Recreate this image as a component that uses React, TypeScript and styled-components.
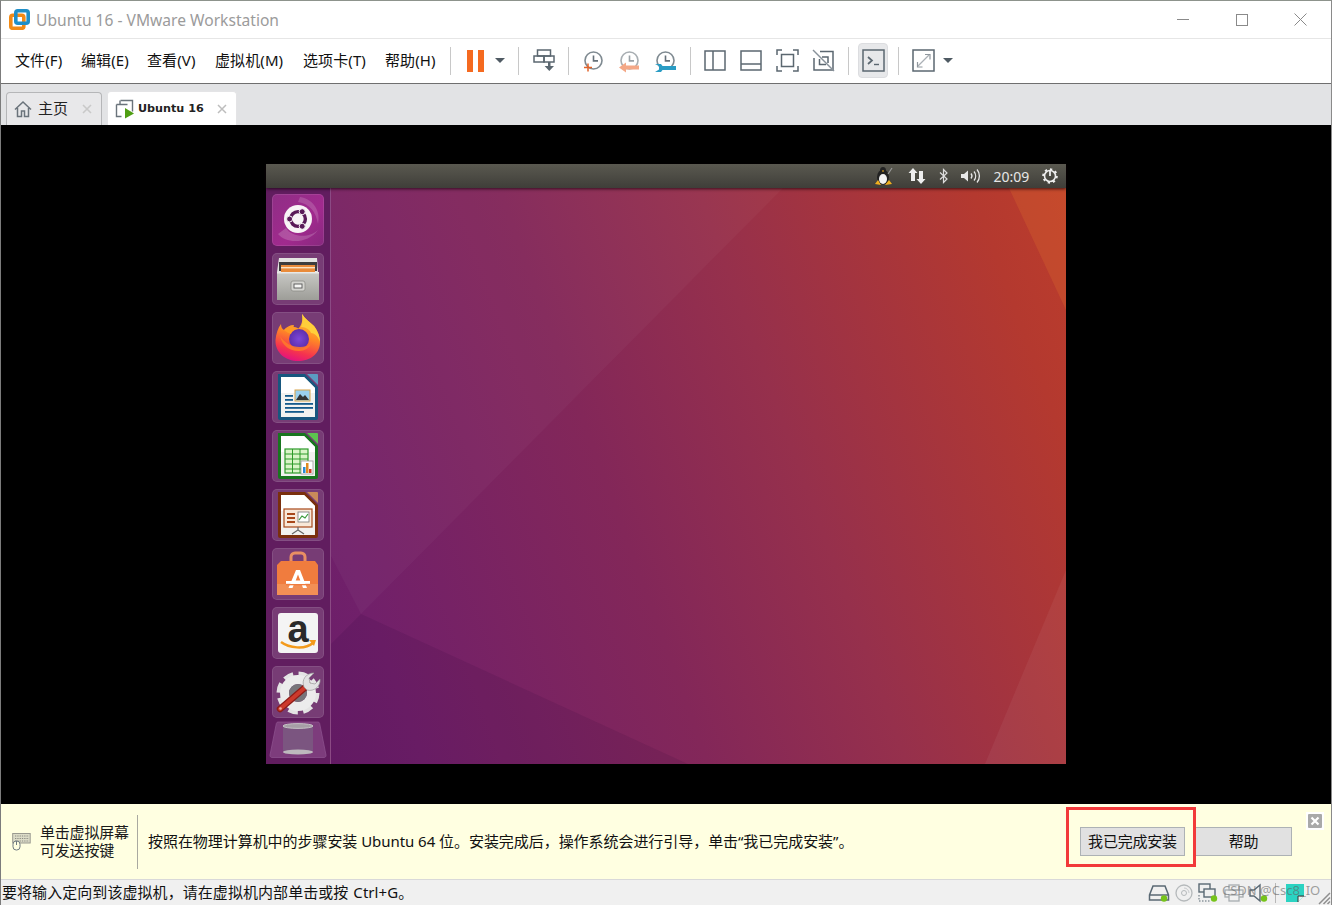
import React from 'react';
import styled, { createGlobalStyle } from 'styled-components';

const Global = createGlobalStyle`
  html, body { margin: 0; padding: 0; background: #fff; overflow: hidden; }
  #root { width: 1332px; height: 905px; }
`;

const FONT = `"Noto Sans", "Noto Sans CJK SC", sans-serif`;

const Win = styled.div`
  position: relative;
  width: 1332px; height: 905px; box-sizing: border-box;
  display: flex; flex-direction: column;
  background: #fff;
  border-top: 1px solid #8d938c;
  border-left: 1px solid #7c7c7c;
  border-right: 1px solid #8a8a8a;
  font-family: ${FONT};
  font-size: 15px; color: #111;
  overflow: hidden;
`;
const TitleBar = styled.div`
  height: 37px; flex: none; display: flex; align-items: center;
  padding-left: 8px; border-bottom: 1px solid #e6e6e6; box-sizing: content-box;
`;
const TitleText = styled.div`
  margin-left: 6px; font-size: 15.6px; color: #9b9b9b; flex: 1; white-space: nowrap;
`;
const WinBtn = styled.div`
  width: 59px; height: 37px; display: flex; align-items: center; justify-content: center;
`;
const WinBtns = styled.div`display: flex; margin-right: 1px;`;

const Toolbar = styled.div`
  height: 43px; padding-bottom: 1px; flex: none; display: flex; align-items: center;
  padding-left: 14px; border-bottom: 1px solid #6f6f6f;
`;
const Menu = styled.div`
  display: flex; width: 422px; flex: none; white-space: nowrap; font-size: 15px; padding-bottom: 3px;
`;
const MenuItem = styled.span<{ $w: number }>`
  width: ${p => p.$w}px; flex: none; letter-spacing: .1px;
`;
const Sep = styled.div<{ $l: number }>`
  width: 1px; height: 28px; background: #c8c8c8; margin-left: ${p => p.$l}px; flex: none;
`;
const Slot = styled.div<{ $w: number; $l?: number }>`
  width: ${p => p.$w}px; margin-left: ${p => p.$l || 0}px; height: 24px; flex: none;
  display: flex; align-items: center; justify-content: center;
`;
const Pressed = styled.div`
  width: 30px; height: 35px; margin-left: 9px; flex: none; box-sizing: border-box;
  display: flex; align-items: center; justify-content: center;
  background: #e7e8ea; border: 1px solid #dcdde0; border-radius: 4px;
`;
const Caret = styled.div`
  width: 0; height: 0; border-left: 5px solid transparent; border-right: 5px solid transparent; border-top: 5px solid #4f5a63;
`;

const TabBar = styled.div`
  height: 41px; flex: none; background: #e2e3e5; display: flex; align-items: flex-end; padding-left: 5px; gap: 5px;
`;
const Tab = styled.div<{ $on?: boolean; $w: number }>`
  width: ${p => p.$w}px; height: ${p => (p.$on ? 34 : 33)}px; box-sizing: border-box; display: flex; align-items: center;
  padding-left: 7px;
  background: ${p => (p.$on ? '#fff' : '#e8e8ea')};
  border: 1px solid ${p => (p.$on ? '#e4e4e6' : '#b5b6b8')}; border-bottom: none;
  border-radius: 4px 4px 0 0;
`;
const TabLabel = styled.span<{ $on?: boolean }>`
  flex: 1; white-space: nowrap;
  margin-left: ${p => (p.$on ? 3 : 6)}px;
  padding-bottom: ${p => (p.$on ? 0 : 4)}px;
  font-family: ${p => (p.$on ? `"DejaVu Sans", sans-serif` : FONT)};
  font-weight: ${p => (p.$on ? 700 : 400)};
  font-size: ${p => (p.$on ? 11.2 : 15)}px;
  color: #222;
`;
const TabX = styled.span`
  width: 19px; display: flex; justify-content: flex-start; flex: none;
`;

const Stage = styled.div`
  flex: 1; background: #000; display: flex; align-items: center; justify-content: center; min-height: 0; padding-bottom: 1px;
`;
const Guest = styled.div`
  width: 800px; height: 600px; display: flex; flex-direction: column; flex: none;
  font-family: "Noto Sans", sans-serif;
`;
const Panel = styled.div`
  height: 24px; flex: none; display: flex; align-items: center; justify-content: flex-end; padding-right: 4px;
  background: linear-gradient(#5a5950, #3f3e39);
  position: relative; z-index: 2;
  box-shadow: 0 1px 3px rgba(20, 0, 10, .75);
  color: #e6e6e6;
`;
const PanelSlot = styled.div<{ $w: number }>`
  width: ${p => p.$w}px; display: flex; justify-content: center; align-items: center; height: 24px; font-size: 14px;
`;
const Desktop = styled.div`flex: 1; display: flex; min-height: 0;`;
const Launcher = styled.div`
  width: 64px; flex: none; display: flex; flex-direction: column; align-items: center; gap: 7px; padding-top: 6px;
  background: #611d5f; border-right: 1px solid #8b4a84;
`;
const Tile = styled.div<{ $bg?: string }>`
  width: 52px; height: 52px; flex: none; box-sizing: border-box; border-radius: 5px;
  background: ${p => p.$bg || 'rgba(255,255,255,.14)'};
  box-shadow: inset 0 0 0 1px rgba(255,255,255,.1);
  display: flex;
`;
const TrashBox = styled.div`width: 58px; height: 37px; flex: none; margin-top: -4px;`;
const Wallpaper = styled.div`
  flex: 1; position: relative;
  background: linear-gradient(70deg, #6a1e69 0%, #71206a 10%, #832759 40%, #96304c 61%, #b4392f 90%, #bc3d2c 100%);
`;
const Facets = styled.svg`position: absolute; inset: 0; width: 100%; height: 100%;`;

const Notice = styled.div`
  position: relative; height: 75px; flex: none; background: #ffffe1; display: flex; align-items: center; padding-left: 11px;
`;
const Hint = styled.div`
  margin-left: 9px; width: 96px; line-height: 18px; padding-bottom: 1px; font-size: 15px; white-space: nowrap; color: #1a1a1a; letter-spacing: -.2px;
`;
const NoticeSep = styled.div`width: 1px; height: 54px; background: #a9a9a0; margin-left: 1px; flex: none;`;
const Message = styled.div`flex: 1; margin-left: 10px; padding-bottom: 3px; white-space: nowrap; font-size: 15px; letter-spacing: -.05px; color: #111;`;
const Btn = styled.div<{ $w: number; $l: number }>`
  width: ${p => p.$w}px; height: 29px; padding-bottom: 3px; margin-left: ${p => p.$l}px; box-sizing: border-box; flex: none;
  background: #e1e1e1; border: 1px solid #adb2b5;
  display: flex; align-items: center; justify-content: center; font-size: 15px; letter-spacing: -.2px; color: #111;
`;
const Spacer = styled.div`width: 39px; flex: none;`;
const Annot = styled.div`
  position: absolute; left: 1065px; top: 3px; width: 130px; height: 60px; box-sizing: border-box; border: 3px solid #f23a3a;
`;
const CloseBtn = styled.div`
  position: absolute; left: 1305px; top: 8px; width: 18px; height: 18px; background: #fff;
  display: flex; align-items: center; justify-content: center;
`;
const Status = styled.div`
  position: relative; height: 25px; flex: none; background: #f0f0f0; border-top: 1px solid #d9d9d9;
  display: flex; align-items: center; padding-left: 1px;
`;
const StatusText = styled.div`flex: 1; padding-bottom: 2px; white-space: nowrap; font-size: 15px; word-spacing: 1px; letter-spacing: .06px; color: #111;`;
const StatusIcons = styled.div`display: flex; align-items: center; flex: none;`;
const Watermark = styled.div`
  position: absolute; left: 1221px; top: 1px; font-size: 13px; color: rgba(100,100,100,.6); white-space: nowrap;
`;

const G = '#5b6770';

const Clock = ({ faded }: { faded?: boolean }) => (
  <g fill="none" stroke={faded ? '#a8aeb2' : '#7f8a91'} strokeWidth="1.6">
    <circle cx="12.5" cy="11.5" r="8.5" />
    <path d="M12.5 6.500v5.400h4.500" stroke={faded ? '#9aa1a6' : '#66717a'} />
  </g>
);

const VMLogo = () => (
  <svg width="21" height="21" viewBox="0 0 21 21">
    <rect x="1.800" y="6.300" width="13" height="13" rx="2" fill="none" stroke="#f28a14" strokeWidth="3.600" />
    <rect x="6.800" y="1.800" width="12.400" height="12.400" rx="2" fill="none" stroke="#1f8fc8" strokeWidth="3.600" />
  </svg>
);

const VMTabIcon = () => (
  <svg width="20" height="20" viewBox="0 0 20 20">
    <path d="M5.500 1.500h12v11M1.500 5.500h11M1.500 5.500v12h5" fill="none" stroke="#6a737b" strokeWidth="1.400" />
    <path d="M5 1.500v4" stroke="#6a737b" strokeWidth="1.400" />
    <path d="M10 9l9 5.500-9 5z" fill="#4f9e12" />
  </svg>
);

const Ubuntu = () => (
  <svg width="52" height="52" viewBox="0 0 52 52">
    <path d="M6 40C14 50 36 50 46 36C38 44 20 44 14 34Z" fill="#fff" opacity=".18" />
    <path d="M28 3C42 5 49 18 46 30C44 18 38 10 26 8Z" fill="#fff" opacity=".16" />
    <circle cx="26" cy="25" r="14" fill="#f8f4f6" />
    <circle cx="26" cy="25" r="7.400" fill="none" stroke="#5a1a58" strokeWidth="3.400" />
    <g fill="#5a1a58" stroke="#f8f4f6" strokeWidth="1">
      <circle cx="17.600" cy="25" r="3" />
      <circle cx="30.200" cy="17.700" r="3" />
      <circle cx="30.200" cy="32.300" r="3" />
    </g>
  </svg>
);
const Files = () => (
  <svg width="52" height="52" viewBox="0 0 52 52">
    <defs>
      <linearGradient id="cab" x1="0" y1="0" x2="0" y2="1"><stop offset="0" stopColor="#c9c9c5" /><stop offset="1" stopColor="#9d9d98" /></linearGradient>
    </defs>
    <path d="M7 5h38l1 14H5z" fill="#e4e4e2" />
    <rect x="7" y="9" width="38" height="9" fill="#3d3d3d" />
    <rect x="9" y="12" width="34" height="7" fill="#e98b3a" />
    <rect x="9" y="14" width="34" height="1.400" fill="#fbe3c4" />
    <rect x="5" y="19" width="42" height="28" fill="url(#cab)" />
    <rect x="5" y="19" width="42" height="1.500" fill="#e8e8e6" />
    <rect x="19" y="28" width="14" height="10" rx="2" fill="#d4d4d0" stroke="#8d8d88" strokeWidth=".8" />
    <rect x="22" y="31" width="8" height="4" fill="#f6f6f4" stroke="#555" strokeWidth=".9" />
  </svg>
);
const Firefox = () => (
  <svg width="52" height="52" viewBox="0 0 52 52">
    <defs>
      <linearGradient id="ff" x1=".7" y1="0" x2=".4" y2="1"><stop offset="0" stopColor="#ffd23c" /><stop offset=".45" stopColor="#ff8a25" /><stop offset=".8" stopColor="#f5334e" /><stop offset="1" stopColor="#e3127e" /></linearGradient>
      <radialGradient id="ffp" cx=".5" cy=".5" r=".55"><stop offset="0" stopColor="#7b48d8" /><stop offset="1" stopColor="#5a2ca8" /></radialGradient>
    </defs>
    <path d="M30 2c3 5 8 8 12 12 4 5 6 11 6 16 0 12-10 19-22 19C14 49 3 41 3.500 28 4 22 6 16 9 12c0 3 1 5 3 6 2-3 6-5 10-5-1 2 0 3 4 4 4-4 5-9 4-15z" fill="url(#ff)" />
    <path d="M30 2c3 5 8 8 12 12 3 4 6 10 6 16-2-6-6-9-9-9-2-5-7-6-10-6 2-4 2-9 1-13z" fill="#ffcf3a" />
    <circle cx="27" cy="27" r="10" fill="url(#ffp)" />
    <path d="M12 18c4-4 11-4 15-1-5 0-7 2-8 5-2-1-5-2-7-4z" fill="#ff9a26" />
    <path d="M8 24c2 9 9 15 19 15 6 0 10-3 12-7-3 2-7 3-11 3-9 0-15-4-20-11z" fill="#ff7a2a" opacity=".85" />
  </svg>
);
const Doc = ({ edge, corner, children }: { edge: string; corner: string; children: React.ReactNode }) => (
  <svg width="52" height="52" viewBox="0 0 52 52">
    <path d="M6 3h27l13 13v31a2 2 0 0 1-2 2H8a2 2 0 0 1-2-2z" fill={edge} />
    <path d="M35 3h10a1 1 0 0 1 1 1v10z" fill={corner} />
    <path d="M9 6h23l11 11v29H9z" fill="#f2f2f0" />
    <path d="M9 6h23l11 11v5H9z" fill="#fff" />
    {children}
  </svg>
);
const Writer = () => (
  <Doc edge="#17577f" corner="#5b9cc2">
    <g fill="#135a8c">
      <rect x="13" y="24" width="8" height="1.800" /><rect x="13" y="28" width="8" height="1.800" /><rect x="13" y="32" width="28" height="1.800" /><rect x="13" y="36" width="28" height="1.800" /><rect x="13" y="40" width="19" height="1.800" />
    </g>
    <rect x="23" y="19" width="15" height="11" fill="#9ad0ee" stroke="#d8a34a" strokeWidth="1" />
    <path d="M24 29l4-6 3 3 2-2 4 5z" fill="#333" />
  </Doc>
);
const Calc = () => (
  <Doc edge="#18761f" corner="#5cc34f">
    <rect x="13" y="19" width="23" height="24" fill="#d9f4c8" stroke="#2d9a2a" strokeWidth="1.200" />
    <path d="M13 24h23M13 29h23M13 34h23M13 39h23M20.500 19v24M28 19v24" stroke="#2d9a2a" strokeWidth="1" />
    <rect x="29" y="31" width="12" height="13" fill="#fff" stroke="#999" strokeWidth=".8" />
    <rect x="31" y="37" width="2.500" height="6" fill="#2a8ad4" /><rect x="34" y="33" width="2.500" height="10" fill="#e08a20" /><rect x="37" y="39" width="2.500" height="4" fill="#d23a2a" />
  </Doc>
);
const Impress = () => (
  <Doc edge="#7a2f0d" corner="#c98a5a">
    <rect x="12" y="20" width="28" height="18" fill="#f8e8d8" stroke="#a8481a" strokeWidth="1.200" />
    <g fill="#a8481a"><rect x="15" y="24" width="8" height="2" /><rect x="15" y="28" width="8" height="2" /><rect x="15" y="32" width="8" height="2" /></g>
    <rect x="26" y="23" width="11" height="10" fill="#fff" stroke="#777" strokeWidth=".8" />
    <path d="M27 31l3-4 3 2 3-4" fill="none" stroke="#3a9a3a" strokeWidth="1.200" />
    <path d="M26 38v3l-6 4M26 41l6 4" fill="none" stroke="#666" strokeWidth="1.200" />
  </Doc>
);
const Software = () => (
  <svg width="52" height="52" viewBox="0 0 52 52">
    <path d="M19 15V9a4 4 0 0 1 4-4h6a4 4 0 0 1 4 4v6" fill="none" stroke="#e98f63" strokeWidth="3" />
    <path d="M9 13h34l3 4v30H5V17z" fill="#f07c3e" />
    <rect x="5" y="36" width="41" height="11" fill="#f28f55" />
    <path d="M24 22h4l7 18h-4l-1.500-4h-7.500l-1.500 4h-4zM26 26.500l-2.300 6h4.600z" fill="#fff" fillRule="evenodd" />
    <rect x="14" y="33" width="24" height="2.800" fill="#fff" />
    <rect x="14" y="36" width="24" height="1.300" fill="#f07c3e" />
  </svg>
);
const AmazonLetter = styled.text`
  font-family: "Liberation Sans", sans-serif; font-weight: 700; font-size: 38px; fill: #2a2a2a;
`;
const Amazon = () => (
  <svg width="52" height="52" viewBox="0 0 52 52">
    <rect x="6" y="6" width="40" height="40" rx="3" fill="#f4f4f4" />
    <AmazonLetter x="26" y="35" textAnchor="middle">a</AmazonLetter>
    <path d="M9 35c8 6 24 8 32 1" fill="none" stroke="#f39a1c" strokeWidth="2.400" />
    <path d="M37 33h7l-2 6z" fill="#f39a1c" />
  </svg>
);
const Settings = () => (
  <svg width="52" height="52" viewBox="0 0 52 52">
    <circle cx="26" cy="27" r="19" fill="none" stroke="#e4e4e4" strokeWidth="5" strokeDasharray="9.500 5.420" />
    <circle cx="26" cy="27" r="13.500" fill="none" stroke="#ececec" strokeWidth="9" />
    <circle cx="26" cy="27" r="9" fill="#77757a" />
    <path d="M8 43L36 19" stroke="#8e1d18" strokeWidth="6.500" strokeLinecap="round" />
    <path d="M8 43L36 19" stroke="#cc3a2c" strokeWidth="4" strokeLinecap="round" />
    <path d="M32 21c-3-7 2-14 10-14l-5 5 1 5 5 1 5-5c1 7-6 13-13 11z" fill="#e2e2e2" stroke="#9a9a9a" strokeWidth=".7" />
    <circle cx="8.500" cy="42.500" r="1.300" fill="#f0b0a0" />
  </svg>
);
const Trash = () => (
  <svg width="58" height="37" viewBox="0 0 58 37">
    <path d="M9 1h40a2 2 0 0 1 1.600 1.200L57 34a2 2 0 0 1-2 2.500H3A2 2 0 0 1 1 34L7.400 2.200A2 2 0 0 1 9 1z" fill="#7d3c7c" stroke="#8f5590" strokeWidth=".7" />
    <path d="M14 5v24c0 4 30 4 30 0V5z" fill="#7b5580" />
    <ellipse cx="29" cy="5" rx="15" ry="2.400" fill="#a69ea6" stroke="#c4c0c4" strokeWidth="1" />
    <ellipse cx="29" cy="31" rx="15" ry="2.600" fill="#bdb9bd" />
  </svg>
);

const Tux = () => (
  <svg width="20" height="20" viewBox="0 0 20 20">
    <ellipse cx="9" cy="11" rx="6" ry="7.500" fill="#222" />
    <ellipse cx="9" cy="13" rx="4" ry="5" fill="#f4f4f4" />
    <ellipse cx="9" cy="4.500" rx="3" ry="3.500" fill="#222" />
    <path d="M8 5l1-1 1 1-1 1z" fill="#f2b01e" />
    <path d="M1 18l3-4 3 5zM11 19l4-5 3 4z" fill="#f2b01e" />
    <path d="M14 8l4-6" stroke="#9a9a9a" strokeWidth="1.200" />
  </svg>
);

const tools = {
  ctrl: (
    <svg width="22" height="23" viewBox="0 0 22 23">
      <g fill="none" stroke={G} strokeWidth="1.500">
        <rect x="4.500" y="1" width="13" height="6" />
        <rect x="1" y="7" width="10" height="6" />
        <rect x="11" y="7" width="10" height="6" />
      </g>
      <path d="M15 13h2.500v4H21l-4.700 5-4.700-5H15z" fill={G} />
    </svg>
  ),
  snap: (
    <svg width="24" height="24" viewBox="0 0 24 24">
      <Clock />
      <path d="M7 14.500v8M3 18.500h8" stroke="#e2632a" strokeWidth="1.500" fill="none" />
    </svg>
  ),
  revert: (
    <svg width="24" height="24" viewBox="0 0 24 24">
      <Clock faded />
      <path d="M2 18.500l7-5v3h13v4H9v3z" fill="#f4a887" />
    </svg>
  ),
  manage: (
    <svg width="24" height="24" viewBox="0 0 24 24">
      <Clock />
      <path d="M2 15h6l1.500 2H23v4H9.500L8 23H2l4-2.500V17z" fill="#2a9cc4" />
    </svg>
  ),
  left: (
    <svg width="22" height="21" viewBox="0 0 22 21"><rect x="1" y="1" width="20" height="19" fill="none" stroke={G} strokeWidth="1.500" /><path d="M9 1v19" stroke={G} strokeWidth="1.500" /></svg>
  ),
  bottom: (
    <svg width="22" height="21" viewBox="0 0 22 21"><rect x="1" y="1" width="20" height="19" fill="none" stroke={G} strokeWidth="1.500" /><path d="M1 14h20" stroke={G} strokeWidth="1.500" /></svg>
  ),
  full: (
    <svg width="23" height="23" viewBox="0 0 23 23"><path d="M1 6V1h5M17 1h5v5M22 17v5h-5M6 22H1v-5" fill="none" stroke={G} strokeWidth="1.500" /><rect x="5.500" y="5.500" width="12" height="12" fill="none" stroke={G} strokeWidth="1.500" /></svg>
  ),
  unity: (
    <svg width="23" height="23" viewBox="0 0 23 23">
      <path d="M8 2.500H21V21H2V9" fill="none" stroke={G} strokeWidth="1.500" />
      <path d="M10 8h6v6M14 15.500H7.500V10" fill="none" stroke={G} strokeWidth="1.500" />
      <path d="M1 1l21 21" stroke="#88919a" strokeWidth="1.400" />
    </svg>
  ),
  console: (
    <svg width="23" height="23" viewBox="0 0 23 23">
      <rect x="1" y="1" width="21" height="21" fill="none" stroke={G} strokeWidth="1.500" />
      <path d="M6 8l4 3.500-4 3.500" fill="none" stroke={G} strokeWidth="1.700" />
      <path d="M12 15.500h5" stroke={G} strokeWidth="1.400" />
    </svg>
  ),
  fit: (
    <svg width="23" height="23" viewBox="0 0 23 23">
      <rect x="1" y="1" width="21" height="21" fill="none" stroke={G} strokeWidth="1.500" />
      <path d="M6 17L17 6" stroke="#aab0b5" strokeWidth="1.200" />
      <path d="M13 5.500h5v5M5.500 13v5h5" fill="none" stroke="#8f979d" strokeWidth="1.200" />
    </svg>
  ),
};

const Dot = () => <circle cx="16" cy="15.500" r="3.200" fill="#76c31a" />;

const statusIcons = [
  { w: 25, ml: 0, el: (
    <svg width="22" height="20" viewBox="0 0 22 20"><path d="M5 3h12l3.500 9v5H1.500v-5zM1.500 12h19" fill="none" stroke="#596873" strokeWidth="1.500" /><Dot /></svg>
  ) },
  { w: 25, ml: 0, el: (
    <svg width="18" height="18" viewBox="0 0 18 18"><circle cx="9" cy="9" r="8" fill="none" stroke="#b5b9bb" strokeWidth="1.300" /><circle cx="9" cy="9" r="2.500" fill="none" stroke="#b5b9bb" /><path d="M9 4a5 5 0 0 1 5 5" fill="none" stroke="#c8cbcd" /></svg>
  ) },
  { w: 25, ml: 0, el: (
    <svg width="22" height="20" viewBox="0 0 22 20"><g fill="none" stroke="#596873" strokeWidth="1.400"><rect x="1" y="1" width="11" height="8" /><rect x="6" y="6" width="11" height="8" fill="#f0f0f0" /></g><path d="M1 12v6h11" fill="none" stroke="#596873" strokeDasharray="1.500 1.500" /><Dot /></svg>
  ) },
  { w: 25, ml: 0, el: (
    <svg width="20" height="18" viewBox="0 0 20 18"><g fill="none" stroke="#a7acb0" strokeWidth="1.300"><rect x="5" y="1" width="10" height="5" /><rect x="1" y="6" width="18" height="7" /><rect x="5" y="11" width="10" height="6" fill="#f0f0f0" /></g></svg>
  ) },
  { w: 25, ml: 0, el: (
    <svg width="22" height="20" viewBox="0 0 22 20"><path d="M2 7h4l6-5v16l-6-5H2z" fill="none" stroke="#596873" strokeWidth="1.400" /><Dot /></svg>
  ) },
  { w: 1, ml: 4, el: <svg width="1" height="20" viewBox="0 0 1 20"><rect width="1" height="20" fill="#b8b8b8" /></svg> },
  { w: 20, ml: 9, el: (
    <svg width="20" height="18" viewBox="0 0 20 18"><path d="M1 0h18v12l-6 6H1z" fill="#2bd3c2" /><path d="M13 18v-6h6" fill="#e8f5f3" stroke="#333" strokeWidth="1" /></svg>
  ) },
];

const GripSlot = styled.div`width: 14px; height: 24px; margin-left: 12px; display: flex; align-items: flex-end; flex: none;`;

const menuItems: [string, number][] = [['文件(F)', 66], ['编辑(E)', 66], ['查看(V)', 68], ['虚拟机(M)', 88], ['选项卡(T)', 82], ['帮助(H)', 52]];

export default function App() {
  return (
    <Win>
      <Global />
      <TitleBar>
        <VMLogo />
        <TitleText>Ubuntu 16 - VMware Workstation</TitleText>
        <WinBtns>
          <WinBtn><svg width="12" height="2" viewBox="0 0 12 2"><rect width="12" height="1" fill="#8a8a8a" /></svg></WinBtn>
          <WinBtn><svg width="12" height="12" viewBox="0 0 12 12"><rect x=".5" y=".5" width="11" height="11" fill="none" stroke="#8a8a8a" /></svg></WinBtn>
          <WinBtn><svg width="13" height="13" viewBox="0 0 13 13"><path d="M.5.5l12 12M12.500.5l-12 12" stroke="#8a8a8a" /></svg></WinBtn>
        </WinBtns>
      </TitleBar>
      <Toolbar>
        <Menu>
          {menuItems.map(([label, w]) => <MenuItem key={label} $w={w}>{label}</MenuItem>)}
        </Menu>
        <Sep $l={13} />
        <Slot $w={38} $l={5}>
          <svg width="17" height="22" viewBox="0 0 17 22"><rect width="6" height="22" fill="#f56a20" /><rect x="11" width="6" height="22" fill="#f56a20" /></svg>
        </Slot>
        <Slot $w={12}><Caret /></Slot>
        <Sep $l={12} />
        <Slot $w={49}>{tools.ctrl}</Slot>
        <Sep $l={0} />
        <Slot $w={36} $l={6}>{tools.snap}</Slot>
        <Slot $w={36}>{tools.revert}</Slot>
        <Slot $w={36}>{tools.manage}</Slot>
        <Sep $l={7} />
        <Slot $w={36} $l={6}>{tools.left}</Slot>
        <Slot $w={36}>{tools.bottom}</Slot>
        <Slot $w={36}>{tools.full}</Slot>
        <Slot $w={36}>{tools.unity}</Slot>
        <Sep $l={7} />
        <Pressed>{tools.console}</Pressed>
        <Sep $l={10} />
        <Slot $w={34} $l={7}>{tools.fit}</Slot>
        <Slot $w={12} $l={2}><Caret /></Slot>
      </Toolbar>
      <TabBar>
        <Tab $w={96}>
          <svg width="18" height="18" viewBox="0 0 18 18"><path d="M1 9.500L9 2l8 7.500M3.500 8v8.500h4V11h3v5.500h4V8" fill="none" stroke="#6a737b" strokeWidth="1.500" /></svg>
          <TabLabel>主页</TabLabel>
          <TabX><svg width="10" height="10" viewBox="0 0 10 10"><path d="M1 1l8 8M9 1l-8 8" stroke="#c9c9c9" strokeWidth="1.600" /></svg></TabX>
        </Tab>
        <Tab $on $w={130}>
          <VMTabIcon />
          <TabLabel $on>Ubuntu 16</TabLabel>
          <TabX><svg width="10" height="10" viewBox="0 0 10 10"><path d="M1 1l8 8M9 1l-8 8" stroke="#bdbdbd" strokeWidth="1.500" /></svg></TabX>
        </Tab>
      </TabBar>
      <Stage>
        <Guest>
          <Panel>
            <PanelSlot $w={38}><Tux /></PanelSlot>
            <PanelSlot $w={28}>
              <svg width="18" height="16" viewBox="0 0 18 16"><path d="M5 0l4.500 5H7v8H3V5H.5zM13 16l-4.500-5H11V3h4v8h2.500z" fill="#eee" /></svg>
            </PanelSlot>
            <PanelSlot $w={24}>
              <svg width="9" height="16" viewBox="0 0 9 16"><path d="M1 4.500l7 6.500-3.500 3.500V1.500L8 5 1 11.500" fill="none" stroke="#ddd" strokeWidth="1.200" /></svg>
            </PanelSlot>
            <PanelSlot $w={30}>
              <svg width="21" height="14" viewBox="0 0 21 14"><path d="M1 5h3l4-3.500v11L4 9H1z" fill="#e8e8e8" /><path d="M11 4.500a4 4 0 0 1 0 5M14 2.500a7 7 0 0 1 0 9M17 .5a10 10 0 0 1 0 13" fill="none" stroke="#e8e8e8" strokeWidth="1.300" /></svg>
            </PanelSlot>
            <PanelSlot $w={53}>20:09</PanelSlot>
            <PanelSlot $w={24}>
              <svg width="16" height="16" viewBox="0 0 16 16">
                <circle cx="8" cy="8" r="5.500" fill="none" stroke="#eee" strokeWidth="1.600" />
                <circle cx="8" cy="8" r="6.800" fill="none" stroke="#eee" strokeWidth="2" strokeDasharray="2.300 3" />
                <path d="M8 3v5" stroke="#eee" strokeWidth="1.800" />
              </svg>
            </PanelSlot>
          </Panel>
          <Desktop>
            <Launcher>
              <Tile $bg="linear-gradient(135deg,#8f2e85,#a12a8e 60%,#87287e)"><Ubuntu /></Tile>
              <Tile><Files /></Tile>
              <Tile><Firefox /></Tile>
              <Tile><Writer /></Tile>
              <Tile><Calc /></Tile>
              <Tile><Impress /></Tile>
              <Tile><Software /></Tile>
              <Tile><Amazon /></Tile>
              <Tile><Settings /></Tile>
              <TrashBox><Trash /></TrashBox>
            </Launcher>
            <Wallpaper>
              <Facets viewBox="0 0 735 576" preserveAspectRatio="none">
                <path d="M0 0H452L30 426 0 368z" fill="#fff" opacity=".03" />
                <path d="M30 426L357 576H0V456z" fill="#1a0030" opacity=".1" />
                <path d="M678 0L735 122V0z" fill="#e87a2c" opacity=".22" />
                <path d="M735 382L654 576H735z" fill="#fff" opacity=".05" />
              </Facets>
            </Wallpaper>
          </Desktop>
        </Guest>
      </Stage>
      <Notice>
        <svg width="19" height="19" viewBox="0 0 19 19">
          <rect x=".7" y="1.500" width="17.500" height="9.500" fill="#dcdcc8" stroke="#9a9a90" />
          <path d="M3 4h14M3 6.500h14M3 9h14" stroke="#8c8c84" strokeDasharray="1.300 1" />
          <rect x="1" y="9" width="7" height="9" rx="3.200" fill="#ffffe1" stroke="#6f7a80" />
          <path d="M4.500 9v4" stroke="#6f7a80" />
        </svg>
        <Hint>单击虚拟屏幕<br />可发送按键</Hint>
        <NoticeSep />
        <Message>按照在物理计算机中的步骤安装 Ubuntu 64 位。安装完成后，操作系统会进行引导，单击“我已完成安装”。</Message>
        <Btn $w={105} $l={0}>我已完成安装</Btn>
        <Btn $w={97} $l={10}>帮助</Btn>
        <Spacer />
        <Annot />
        <CloseBtn>
          <svg width="14" height="14" viewBox="0 0 14 14"><rect width="14" height="14" rx="1" fill="#a9a9a9" /><path d="M3.500 3.500l7 7M10.500 3.500l-7 7" stroke="#fff" strokeWidth="2.200" /></svg>
        </CloseBtn>
      </Notice>
      <Status>
        <StatusText>要将输入定向到该虚拟机，请在虚拟机内部单击或按 Ctrl+G。</StatusText>
        <StatusIcons>
          {statusIcons.map((s, i) => (
            <Slot key={i} $w={s.w} $l={s.ml}>{s.el}</Slot>
          ))}
          <GripSlot>
            <svg width="14" height="14" viewBox="0 0 14 14"><path d="M13 2L2 13M13 6.500L6.500 13M13 10.500L10.500 13" stroke="#8f8f8f" strokeWidth="1.500" /></svg>
          </GripSlot>
        </StatusIcons>
        <Watermark>CSDN @Csc8_IO</Watermark>
      </Status>
    </Win>
  );
}
